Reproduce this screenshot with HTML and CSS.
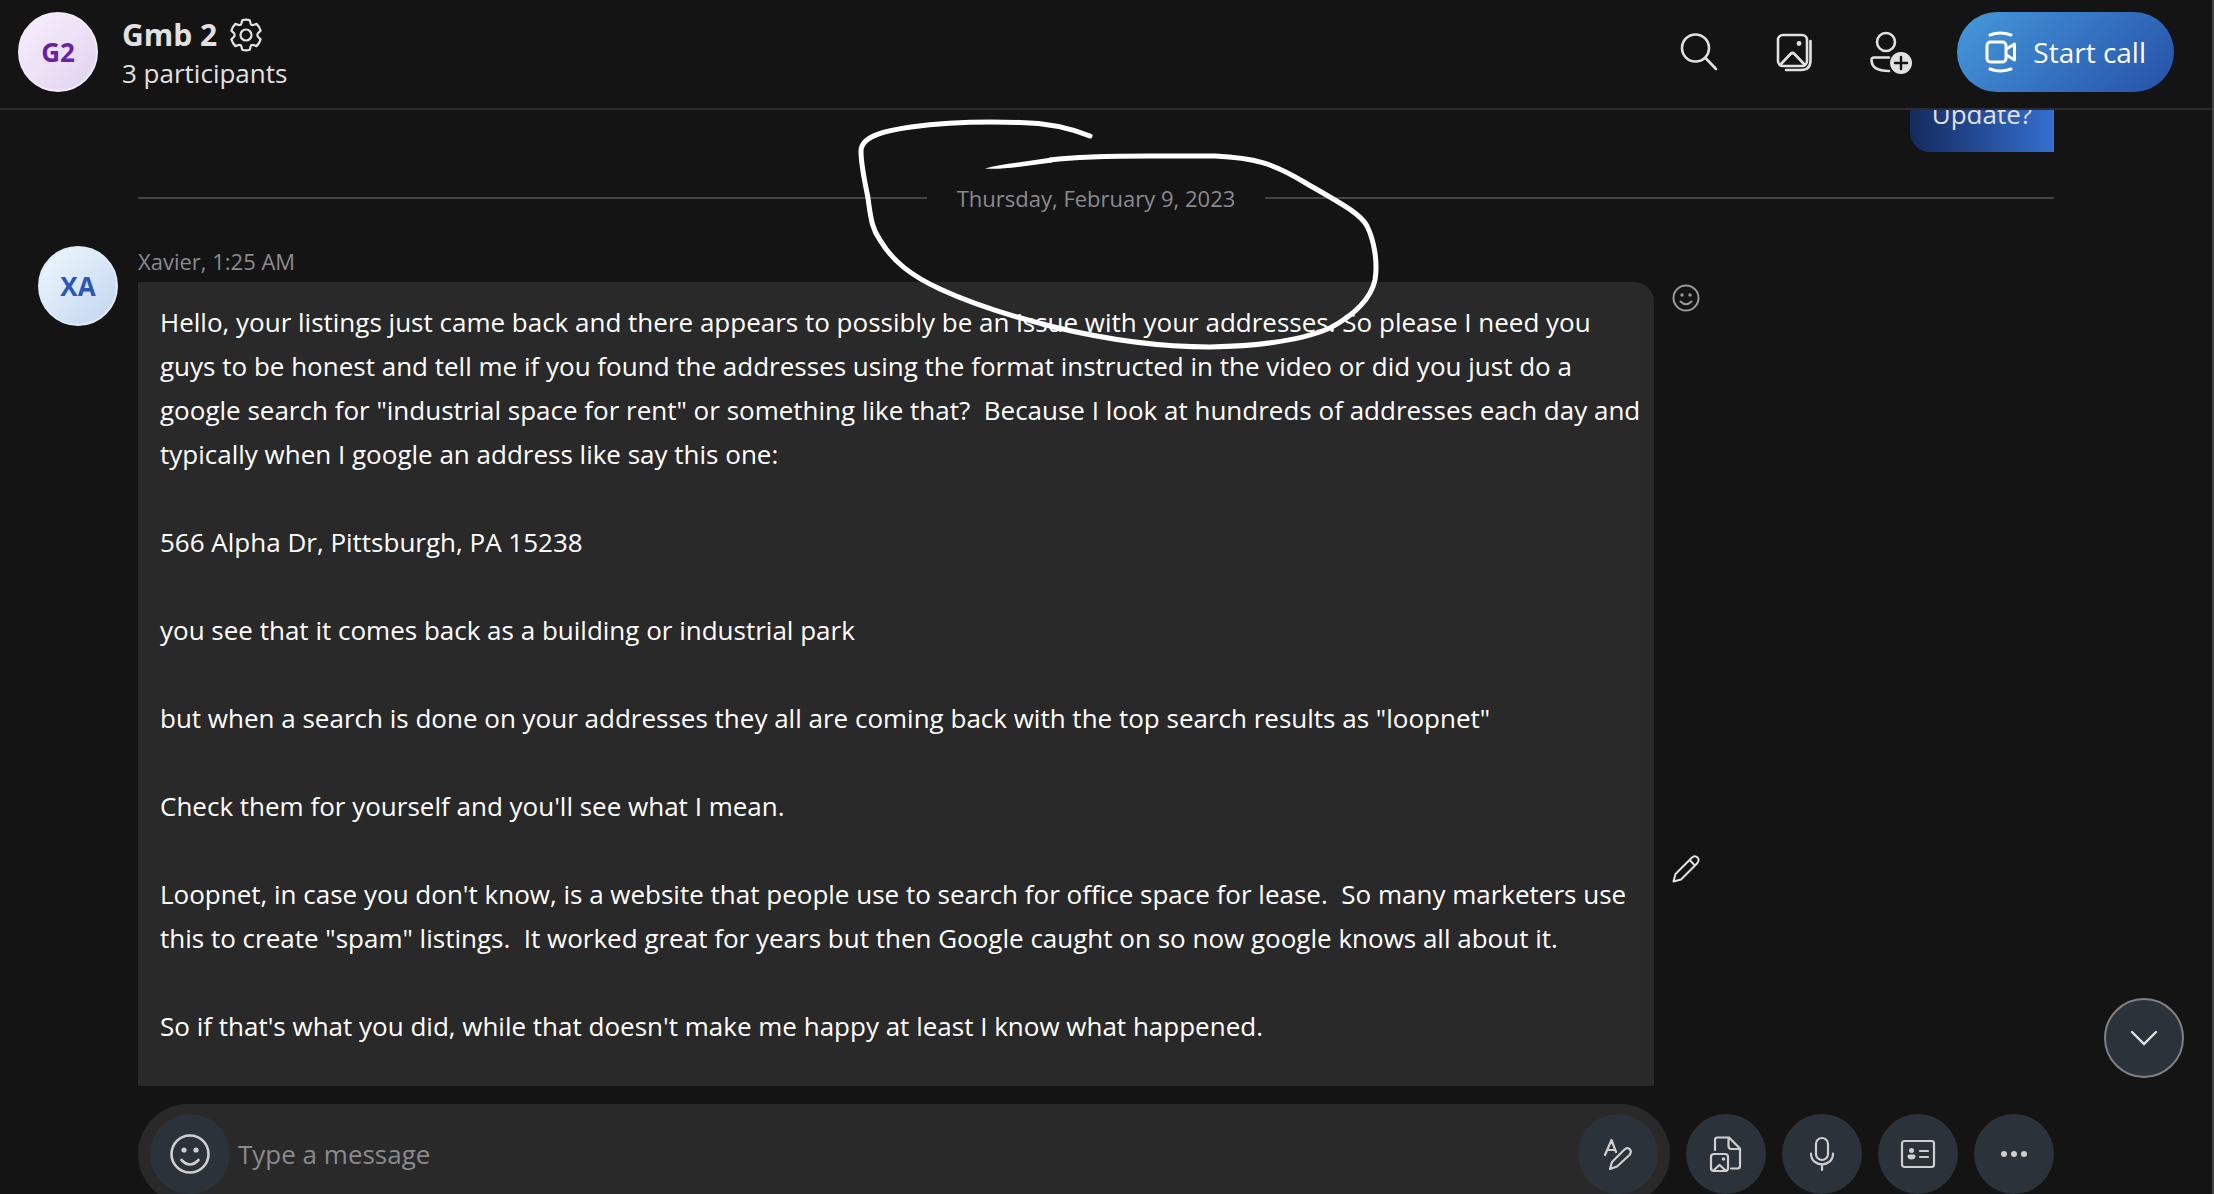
FILE: index.html
```html
<!DOCTYPE html>
<html lang="en">
<head>
    <meta charset="UTF-8">
    <meta name="viewport" content="width=device-width, initial-scale=1.0">
    <title>Gmb 2</title>
    <link rel="stylesheet" href="styles.css">
</head>
<body>

    <header class="header">
        <div class="avatar avatar-group">G2</div>
        <div class="group-info">
            <div class="group-title">
                <h1>Gmb 2</h1>
                <button class="icon-btn" aria-label="Group settings">
                    <svg width="34" height="34" viewBox="0 0 34 34" fill="none" stroke="currentColor" stroke-width="2.2" stroke-linejoin="round">
                        <path d="M13.2 2.2Q17 1 20.8 2.2L21.6 5.6Q22.2 7.4 24.2 7L27.6 5.9Q30.5 8.8 31.6 12.6L29 15.2Q27.8 17 29 18.8L31.6 21.4Q30.5 25.2 27.6 28.1L24.2 27Q22.2 26.6 21.6 28.4L20.8 31.8Q17 33 13.2 31.8L12.4 28.4Q11.8 26.6 9.8 27L6.4 28.1Q3.5 25.2 2.4 21.4L5 18.8Q6.2 17 5 15.2L2.4 12.6Q3.5 8.8 6.4 5.9L9.8 7Q11.8 7.4 12.4 5.6Z"/>
                        <circle cx="17" cy="17" r="5.5"/>
                    </svg>
                </button>
            </div>
            <p>3 participants</p>
        </div>
        <div class="header-actions">
            <button class="icon-btn" aria-label="Search">
                <svg width="44" height="44" viewBox="0 0 44 44" fill="none" stroke="currentColor" stroke-width="2.6" stroke-linecap="round">
                    <circle cx="18.5" cy="18" r="13.5"/>
                    <path d="M28.5 28L39 39"/>
                </svg>
            </button>
            <button class="icon-btn" aria-label="Gallery">
                <svg width="44" height="44" viewBox="0 0 44 44" fill="none" stroke="currentColor" stroke-width="2.6" stroke-linecap="round" stroke-linejoin="round">
                    <rect x="5" y="5" width="29" height="31" rx="5"/>
                    <path d="M8 34L17.5 24Q19.5 22 21.5 24L31 34M37.5 11V30Q37.5 40 28 40H13"/>
                    <circle cx="26" cy="13.5" r="2.4" fill="currentColor" stroke="none"/>
                </svg>
            </button>
            <button class="icon-btn" aria-label="Add people">
                <svg width="44" height="44" viewBox="0 0 44 44" fill="none" stroke="currentColor" stroke-width="2.6" stroke-linecap="round">
                    <circle cx="17" cy="12" r="9"/>
                    <path d="M20 27.5H5Q2.5 27.5 2.5 30C2.5 38 9 41 20 41"/>
                    <circle cx="32" cy="33" r="11" fill="currentColor" stroke="none"/>
                    <path class="plus" d="M32 27V39M26 33H38" stroke-width="2.4"/>
                </svg>
            </button>
            <button class="call-btn">
                <svg width="32" height="42" viewBox="0 0 32 42" fill="none" stroke="currentColor" stroke-width="3" stroke-linecap="round" stroke-linejoin="round">
                    <rect x="2" y="11" width="19" height="20" rx="3.5"/>
                    <path d="M21.5 18L29.5 13V29L21.5 24M5 4Q15 0 26 4M5 38Q15 42 26 38"/>
                </svg>
                Start call
            </button>
        </div>
    </header>

    <main class="chat">
        <div class="message-own">Update?</div>

        <div class="date-divider">
            <time datetime="2023-02-09">Thursday, February 9, 2023</time>
        </div>

        <article class="message">
            <div class="avatar avatar-user">XA</div>
            <div class="message-main">
                <div class="message-meta">Xavier, 1:25 AM</div>
                <div class="message-row">
                    <div class="bubble">
                        <p>Hello, your listings just came back and there appears to possibly be an issue with your addresses. So please I need you guys to be honest and tell me if you found the addresses using the format instructed in the video or did you just do a google search for "industrial space for rent" or something like that?&nbsp; Because I look at hundreds of addresses each day and typically when I google an address like say this one:</p>
                        <p>566 Alpha Dr, Pittsburgh, PA 15238</p>
                        <p>you see that it comes back as a building or industrial park</p>
                        <p>but when a search is done on your addresses they all are coming back with the top search results as "loopnet"</p>
                        <p>Check them for yourself and you'll see what I mean.</p>
                        <p>Loopnet, in case you don't know, is a website that people use to search for office space for lease.&nbsp; So many marketers use this to create "spam" listings.&nbsp; It worked great for years but then Google caught on so now google knows all about it.</p>
                        <p>So if that's what you did, while that doesn't make me happy at least I know what happened.</p>
                    </div>
                    <div class="message-actions">
                        <button class="icon-btn react-btn" aria-label="React">
                            <svg width="28" height="28" viewBox="0 0 28 28" fill="none" stroke="currentColor" stroke-width="2" stroke-linecap="round">
                                <circle cx="14" cy="14" r="12.5"/>
                                <path d="M8.5 17.5Q14 23 19.5 17.5"/>
                                <circle cx="10" cy="11" r="1.7" fill="currentColor" stroke="none"/>
                                <circle cx="18" cy="11" r="1.7" fill="currentColor" stroke="none"/>
                            </svg>
                        </button>
                        <button class="icon-btn edit-btn" aria-label="Edit">
                            <svg width="28" height="28" viewBox="0 0 28 28" fill="none" stroke="currentColor" stroke-width="2" stroke-linejoin="round">
                                <path d="M1.5 26.5L3.5 19L19.5 3C21.5 1 24 1 25.5 2.5C27 4 27 6.5 25 8.5L9 24.5ZM17.5 5L23 10.5"/>
                            </svg>
                        </button>
                    </div>
                </div>
            </div>
        </article>

        <!-- pen mark around the date -->
        <svg class="pen-mark" width="560" height="270" viewBox="840 100 560 270" fill="none" stroke="#fff" stroke-width="5" stroke-linecap="round" stroke-linejoin="round">
            <path d="M1090 136C1075 130 1053 123 1020 122.5C975 121 940 123 911 127C890 130 861 135 861 151C861 166 865 182 868 198C871 222 873 230 880 240C893 262 912 276 940 289C968 302 1010 316 1054 327C1100 338 1150 347 1210 347C1260 346 1300 341 1330 328C1356 314 1371 298 1375 280C1378 262 1374 240 1367 226C1360 213 1340 203 1304 182C1272 163 1255 158 1215 156L1150 156C1100 156 1075 157 1050 160"/>
            <path d="M985 168.5Q998 165 1018 162.5L1052 157.5V162.5L1018 167Q998 169.5 985 168.5Z" fill="#fff" stroke="none"/>
        </svg>

        <button class="scroll-btn" aria-label="Scroll to latest">
            <svg width="28" height="16" viewBox="0 0 28 16" fill="none" stroke="currentColor" stroke-width="2.4" stroke-linecap="round">
                <path d="M2 2L14 14L26 2"/>
            </svg>
        </button>
    </main>

    <footer class="composer">
        <div class="input-box">
            <button class="round-btn" aria-label="Emoji">
                <svg width="40" height="40" viewBox="0 0 40 40" fill="none" stroke="currentColor" stroke-width="2.6" stroke-linecap="round">
                    <circle cx="20" cy="20" r="18.5"/>
                    <path d="M11.5 26Q20 35 28.5 26"/>
                    <circle cx="14" cy="16" r="2.6" fill="currentColor" stroke="none"/>
                    <circle cx="26" cy="16" r="2.6" fill="currentColor" stroke="none"/>
                </svg>
            </button>
            <input type="text" placeholder="Type a message" aria-label="Type a message">
            <button class="round-btn" aria-label="Text formatting">
                <svg width="32" height="32" viewBox="0 0 32 32" fill="none" stroke="currentColor" stroke-width="2.2" stroke-linecap="round" stroke-linejoin="round">
                    <path d="M3 17L9.5 2L14 14M5.5 12H12.5M8 31L10 24L22 12C26 8 31 12 27.5 17L15 28.5Z"/>
                </svg>
            </button>
        </div>
        <button class="round-btn" aria-label="Add files">
            <svg width="36" height="36" viewBox="0 0 36 36" fill="none" stroke="currentColor" stroke-width="2.2" stroke-linecap="round" stroke-linejoin="round">
                <path d="M7 14V4Q7 1.5 9.5 1.5H21L32 12.5V30Q32 32.5 29.5 32.5H23M20.5 2V10Q20.5 13 23.5 13H31"/>
                <rect x="3" y="18" width="17" height="17" rx="3"/>
                <path d="M6 34L11.5 29L17 34"/>
                <circle cx="15.5" cy="23" r="1.8" fill="currentColor" stroke="none"/>
            </svg>
        </button>
        <button class="round-btn" aria-label="Record audio">
            <svg width="36" height="36" viewBox="0 0 36 36" fill="none" stroke="currentColor" stroke-width="2.2" stroke-linecap="round">
                <rect x="12" y="2" width="12" height="22" rx="6"/>
                <path d="M7 17.5C7 32 29 32 29 17.5M18 29V34"/>
            </svg>
        </button>
        <button class="round-btn" aria-label="Share contact">
            <svg width="36" height="36" viewBox="0 0 36 36" fill="none" stroke="currentColor" stroke-width="2.2" stroke-linecap="round">
                <rect x="2" y="5" width="32" height="26" rx="2.5"/>
                <path d="M20 15H28M20 21H28"/>
                <circle cx="11.5" cy="14.5" r="2.5" fill="currentColor" stroke="none"/>
                <path d="M9 18.5H14Q15.5 18.5 15.5 20.5Q15 23.5 11.5 23.5Q8 23.5 7.5 20.5Q7.5 18.5 9 18.5Z" fill="currentColor" stroke="none"/>
            </svg>
        </button>
        <button class="round-btn" aria-label="More">
            <svg width="36" height="36" viewBox="0 0 36 36" fill="currentColor">
                <circle cx="8" cy="18" r="3"/>
                <circle cx="18" cy="18" r="3"/>
                <circle cx="28" cy="18" r="3"/>
            </svg>
        </button>
    </footer>

</body>
</html>
```
FILE: styles.css
```css
:root {
    --bg-color: #141414;
    --bubble-bg: #292929;
    --text-color: #e1e1e1;
    --muted-color: #8a8a8e;
    --border-color: #2b2b30;
    --button-bg: #2b323a;
}

* {
    box-sizing: border-box;
}

body {
    background: var(--bg-color);
    color: var(--text-color);
    font-family: "Open Sans", "Noto Sans", sans-serif;
    font-size: 26px;
    margin: 0;
    height: 100vh;
    display: flex;
    flex-direction: column;
    overflow: hidden;
    border-right: 2px solid #444;
}

h1,
p {
    margin: 0;
}

button,
input {
    font: inherit;
    color: inherit;
    background: none;
    border: none;
    padding: 0;
}

button {
    cursor: pointer;
}

svg {
    display: block;
}

/* Header */
.header {
    display: flex;
    align-items: center;
    flex: none;
    padding: 12px 38px 16px 18px;
    border-bottom: 2px solid var(--border-color);
}

.avatar {
    width: 80px;
    height: 80px;
    border-radius: 50%;
    display: flex;
    align-items: center;
    justify-content: center;
    font-weight: 700;
    flex: none;
}

.avatar-group {
    background: linear-gradient(135deg, #f8effc, #e0d3ef);
    border: 2px solid #f3eaf9;
    color: #6b1fa5;
}

.avatar-user {
    background: linear-gradient(135deg, #f0f7fd, #c1d6f0);
    border: 2px solid #dfebf8;
    color: #2956b8;
}

.group-info {
    margin-left: 24px;
    padding-top: 4px;
    flex: 1;
    line-height: 38px;
}

.group-title {
    display: flex;
    align-items: center;
    gap: 12px;
}

.group-title h1 {
    font-size: 30px;
    font-weight: 700;
}

.header-actions {
    display: flex;
    align-items: center;
    gap: 52px;
}

.call-btn {
    display: flex;
    align-items: center;
    justify-content: center;
    gap: 16px;
    height: 80px;
    padding: 0 28px;
    margin-left: -8px;
    border-radius: 40px;
    background: linear-gradient(135deg, #4599db, #2650a8);
    color: #fff;
    font-size: 28px;
}

.plus {
    stroke: var(--bg-color);
}

/* Chat */
.chat {
    position: relative;
    flex: 1;
    min-height: 0;
    overflow: hidden;
    padding: 0 158px 0 38px;
    display: flex;
    flex-direction: column;
}

/* scrolled partly under the header */
.message-own {
    align-self: flex-end;
    margin-top: -30px;
    padding: 12px 22px 16px;
    line-height: 44px;
    border-radius: 20px 0 0 20px;
    background: linear-gradient(90deg, #152a5e, #3470d0);
}

.date-divider {
    display: flex;
    align-items: center;
    gap: 30px;
    margin: 30px 0 32px 100px;
    font-size: 22px;
    line-height: 32px;
    color: var(--muted-color);
}

.date-divider::before,
.date-divider::after {
    content: "";
    flex: 1;
    height: 2px;
    background: #444;
}

.message {
    display: flex;
    gap: 20px;
}

.message-main {
    flex: 1;
}

.message-meta {
    font-size: 22px;
    line-height: 30px;
    margin-bottom: 6px;
    color: var(--muted-color);
}

.message-row {
    display: flex;
}

.bubble {
    flex: 1;
    min-height: 1146px;
    padding: 18px 8px 18px 22px;
    border-radius: 0 20px 20px 0;
    background: var(--bubble-bg);
    color: #fff;
    line-height: 44px;
}

.bubble p + p {
    margin-top: 44px;
}

.message-actions {
    width: 400px;
    padding: 2px 18px;
    display: flex;
    flex-direction: column;
    align-items: flex-start;
}

.react-btn {
    color: #9a9a9a;
}

.edit-btn {
    margin: auto 0;
}

.pen-mark {
    position: absolute;
    top: -10px;
    left: calc(50% - 266px);
    pointer-events: none;
}

.scroll-btn {
    position: absolute;
    right: 28px;
    bottom: 8px;
    width: 80px;
    height: 80px;
    display: flex;
    align-items: center;
    justify-content: center;
    border: 2px solid #808184;
    border-radius: 50%;
    background: var(--button-bg);
}

/* Composer, its lower edge runs off the window */
.composer {
    display: flex;
    flex: none;
    gap: 16px;
    height: 108px;
    padding: 18px 158px 0 138px;
    color: #cfcfcf;
}

.input-box {
    display: flex;
    align-items: center;
    flex: 1;
    gap: 8px;
    height: 100px;
    padding: 0 12px;
    border-radius: 50px;
    background: var(--bubble-bg);
}

.input-box input {
    flex: 1;
    min-width: 0;
    outline: none;
}

.input-box input::placeholder {
    color: var(--muted-color);
    opacity: 1;
}

.round-btn {
    width: 80px;
    height: 80px;
    margin: 10px 0;
    border-radius: 50%;
    background: var(--button-bg);
    display: flex;
    align-items: center;
    justify-content: center;
    flex: none;
}
```
